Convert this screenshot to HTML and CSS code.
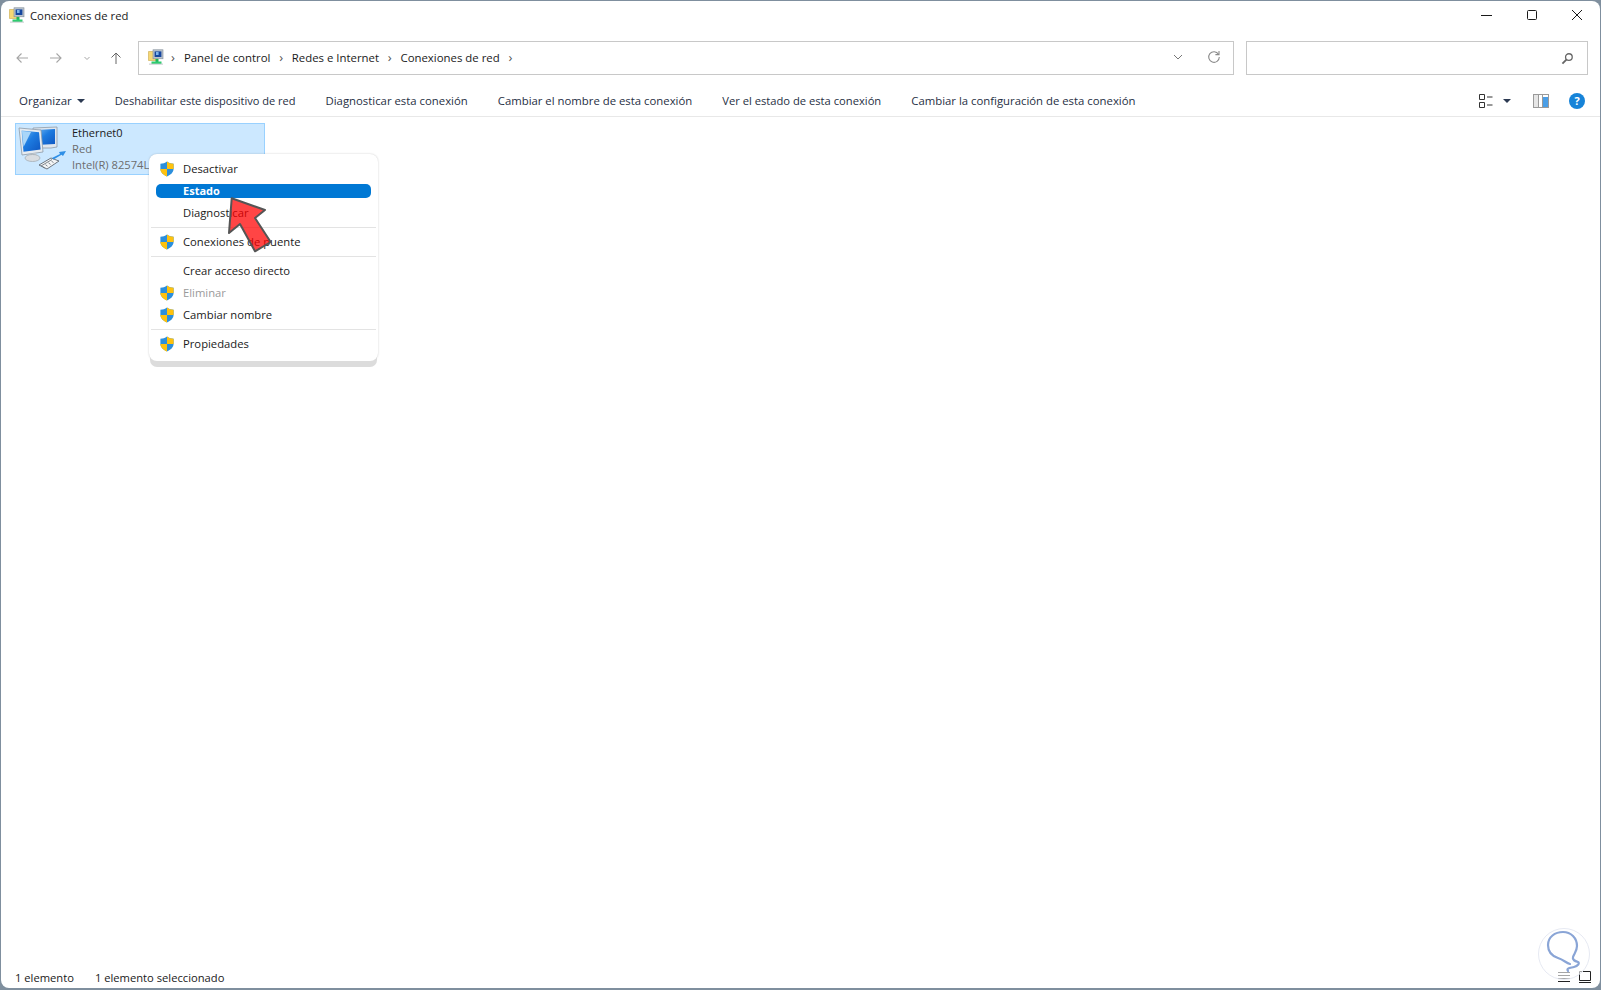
FILE: index.html
```html
<!DOCTYPE html>
<html lang="es">
<head>
<meta charset="utf-8">
<title>Conexiones de red</title>
<link rel="stylesheet" href="styles.css">
</head>
<body>
<svg class="defs" width="0" height="0">
  <defs>
    <symbol id="netfolder" viewBox="0 0 16 16">
      <path d="M0.500 2.500h4l1-1h4v10h-9z" fill="#f7d774" stroke="#c9a94a" stroke-width=".6"/>
      <rect x="5" y="0.800" width="10" height="9" fill="#b9c2cc" stroke="#7f8a96" stroke-width=".6"/>
      <rect x="6.600" y="2.400" width="6.800" height="5.600" fill="#16479f"/>
      <rect x="8" y="3" width="2.600" height="3" fill="#7fb4ea"/>
      <rect x="7.500" y="10" width="3" height="3" fill="#1fb45a"/>
      <rect x="3.500" y="12.500" width="10" height="2.500" fill="#2ecc6e"/>
      <rect x="1" y="14.600" width="14" height="1" fill="#c4c8cc"/>
    </symbol>
    <symbol id="shield" viewBox="0 0 16 16">
      <path d="M8 .5C6 2 4 2.600 1.400 2.800v5C1.400 11.400 4.400 14 8 15.500c3.600-1.500 6.600-4.100 6.600-7.700v-5C12 2.600 10 2 8 .5z" fill="#2c8fdc"/>
      <path d="M8 .5C10 2 12 2.600 14.600 2.800V8H8z" fill="#ffc20e"/>
      <path d="M8 8H1.400C1.400 11.400 4.400 14 8 15.500z" fill="#ffc20e"/>
    </symbol>
    <linearGradient id="screen" x1="0" y1="0" x2="1" y2="1">
      <stop offset="0" stop-color="#6fb6f2"/>
      <stop offset=".45" stop-color="#1d7be0"/>
      <stop offset="1" stop-color="#0f57c2"/>
    </linearGradient>
  </defs>
</svg>
<div class="window">
  <header class="titlebar">
    <svg class="title-icon"><use href="#netfolder"/></svg>
    <span class="title-text">Conexiones de red</span>
    <div class="winbtns">
      <svg class="winbtn" viewBox="0 0 12 12"><path d="M0 6.500h11" stroke="#1a1a1a" fill="none"/></svg>
      <svg class="winbtn" viewBox="0 0 12 12"><rect x="1.500" y="1.500" width="9" height="9" rx="1" stroke="#1a1a1a" fill="none"/></svg>
      <svg class="winbtn" viewBox="0 0 12 12"><path d="M1 1l10 10M11 1L1 11" stroke="#1a1a1a" fill="none"/></svg>
    </div>
  </header>

  <nav class="navbar">
    <div class="navbtns">
      <svg class="navico" viewBox="0 0 14 14"><path d="M13 7H2M6.500 2.500L2 7l4.500 4.500" stroke="#a6a6a6" fill="none" stroke-width="1.100"/></svg>
      <svg class="navico" viewBox="0 0 14 14"><path d="M1 7h11M7.500 2.500L12 7l-4.500 4.500" stroke="#a6a6a6" fill="none" stroke-width="1.100"/></svg>
      <svg class="navico small" viewBox="0 0 8 8"><path d="M1.500 3L4 5.500 6.500 3" stroke="#a6a6a6" fill="none"/></svg>
      <svg class="navico" viewBox="0 0 14 14"><path d="M7 13V2M2.500 6.500L7 2l4.500 4.500" stroke="#666" fill="none" stroke-width="1"/></svg>
    </div>
    <div class="address">
      <svg class="addr-icon"><use href="#netfolder"/></svg>
      <span class="crumb-sep first">›</span>
      <span class="crumb">Panel de control</span>
      <span class="crumb-sep">›</span>
      <span class="crumb">Redes e Internet</span>
      <span class="crumb-sep">›</span>
      <span class="crumb">Conexiones de red</span>
      <span class="crumb-sep">›</span>
      <span class="spacer"></span>
      <svg class="addr-chev" viewBox="0 0 10 10"><path d="M1 3l4 4 4-4" stroke="#777" fill="none"/></svg>
      <svg class="addr-refresh" viewBox="0 0 14 14"><path d="M11.500 4.200A5.300 5.300 0 1 0 12.300 7" stroke="#8a8a8a" fill="none" stroke-width="1.100"/><path d="M12 1v3.600H8.400" stroke="#8a8a8a" fill="none" stroke-width="1.100"/></svg>
    </div>
    <div class="search">
      <svg class="search-ico" viewBox="0 0 14 14"><circle cx="8.500" cy="5.500" r="3.600" stroke="#666" fill="none" stroke-width="1.400"/><path d="M5.800 8.200L1.500 12.500" stroke="#666" stroke-width="2"/></svg>
    </div>
  </nav>

  <div class="toolbar">
    <span class="tool organize">Organizar<i class="caret"></i></span>
    <span class="tool tool-narrow">Deshabilitar este dispositivo de red</span>
    <span class="tool tool-wide">Diagnosticar esta conexión</span>
    <span class="tool tool-wide">Cambiar el nombre de esta conexión</span>
    <span class="tool">Ver el estado de esta conexión</span>
    <span class="tool tool-wide">Cambiar la configuración de esta conexión</span>
    <span class="spacer"></span>
    <svg class="view-ico" viewBox="0 0 14 14"><path d="M.500.500h5v5h-5zM.500 8.500h5v5h-5zM8 3h5.500M8 11h5.500" stroke="#333" fill="none"/></svg>
    <i class="caret view-caret"></i>
    <svg class="pane-ico" viewBox="0 0 16 14"><rect x=".500" y=".500" width="15" height="13" fill="#fff" stroke="#9a9a9a"/><rect x="1" y="1" width="4" height="12" fill="#e6e6e6"/><rect x="10" y="3" width="5" height="10" fill="#4a9ee6"/><path d="M5.500 1v12M9.500 1v12" stroke="#9a9a9a"/></svg>
    <span class="help">?</span>
  </div>

  <main class="content">
    <div class="item">
      <svg class="item-icon" viewBox="0 0 48 48">
        <path d="M15 3l24-1v20l-6 1H15z" fill="#dfe6ee" stroke="#8d9aa8" stroke-width=".8"/>
        <path d="M18 5l19-1v15l-19 1z" fill="url(#screen)"/>
        <path d="M1 3l22 2 2 22-21 3z" fill="#e6ebf0" stroke="#8d9aa8" stroke-width=".8"/>
        <path d="M3.500 5.500l17.500 1.700 1.600 17.300-17.100 2.200z" fill="url(#screen)"/>
        <path d="M4 6l9 1-7.500 15z" fill="#a9d6f9"/>
        <path d="M11 29l7-1 1 4-7 1z" fill="#c5ccd3"/>
        <ellipse cx="14.500" cy="33" rx="7.500" ry="3.500" fill="#d9dde1" stroke="#a5adb5" stroke-width=".8"/>
        <path d="M21 40l12-7 8 3-12 8z" fill="#f3f5f6" stroke="#5f6870" stroke-width=".9"/>
        <path d="M24.500 41.500l2 1.500M27.500 39.700l2 1.500M30.500 37.900l2 1.500M33.500 36.100l2 1.500M23 41l11-6.500" stroke="#5f6870" stroke-width=".8" fill="none"/>
        <path d="M34 33l8-4-1-2 7-1-3 5-1.500-1.200-8 4.600z" fill="#2f8fe6"/>
      </svg>
      <div class="item-text">
        <span class="item-name">Ethernet0</span>
        <span class="item-sub">Red</span>
        <span class="item-sub">Intel(R) 82574L</span>
      </div>
    </div>
  </main>

  <footer class="statusbar">
    <span>1 elemento</span>
    <span>1 elemento seleccionado</span>
    <span class="spacer"></span>
    <svg class="status-ico" viewBox="0 0 12 12"><path d="M0 1.500h12M0 4.500h12M0 7.500h12M0 10.500h12" stroke="#222" fill="none"/></svg>
    <svg class="status-ico" viewBox="0 0 12 12"><path d="M.500 .500h11v9h-11zM0 11.500h12" stroke="#222" fill="none"/></svg>
  </footer>

  <div class="menu">
    <div class="mi"><svg class="shield"><use href="#shield"/></svg><span>Desactivar</span></div>
    <div class="mi active"><span>Estado</span></div>
    <div class="mi"><span>Diagnosticar</span></div>
    <hr class="msep">
    <div class="mi"><svg class="shield"><use href="#shield"/></svg><span>Conexiones de puente</span></div>
    <hr class="msep">
    <div class="mi"><span>Crear acceso directo</span></div>
    <div class="mi disabled"><svg class="shield"><use href="#shield"/></svg><span>Eliminar</span></div>
    <div class="mi"><svg class="shield"><use href="#shield"/></svg><span>Cambiar nombre</span></div>
    <hr class="msep">
    <div class="mi"><svg class="shield"><use href="#shield"/></svg><span>Propiedades</span></div>
  </div>

  <svg class="pointer" viewBox="0 0 60 70">
    <path d="M11.700 9.300L45 21l-10 8 15.700 24L35 62.300 20 35 9 44z" fill="#ff0000" fill-opacity=".73" stroke="#555" stroke-width="2" stroke-linejoin="round"/>
  </svg>

  <svg class="watermark" viewBox="0 0 54 54">
    <circle cx="27" cy="27" r="25.500" fill="#fff" fill-opacity=".6" stroke="#e6e9f2"/>
    <path d="M33 37c-4-1-6-4-12-6-6-2-10-6-10-13C11 10 18 5 26 5s14 6 14 14c0 5-3 8-4 11-1 3 2 4 5 5 2 1 0 4-4 5s-8 1-6 4" fill="none" stroke="#8aa5d6" stroke-width="2.200" stroke-linecap="round"/>
  </svg>
</div>
</body>
</html>
```

FILE: styles.css
```css
* { box-sizing: border-box; }
html, body { margin: 0; height: 100%; overflow: hidden; }
body { background: #7f8f9e; font-family: "Open Sans", "Noto Sans", "Liberation Sans", sans-serif; font-size: 11.5px; color: #1a1a1a; }
.defs { position: absolute; }
.window {
  position: relative; width: 1599px; height: 987px; margin: 1px 1px 2px 1px;
  background: #fff; border-radius: 8px; display: flex; flex-direction: column; overflow: hidden;
}
.spacer { flex: 1; }

.titlebar { height: 30px; display: flex; align-items: center; padding: 0 0 2px 8px; flex: none; }
.title-icon { width: 16px; height: 16px; margin-right: 5px; }
.title-text { font-size: 11.3px; }
.winbtns { margin-left: auto; display: flex; gap: 33px; padding-right: 17px; }
.winbtn { width: 12px; height: 12px; display: block; }

.navbar { height: 34px; display: flex; align-items: stretch; margin-top: 10px; padding-right: 12px; flex: none; }
.navbtns { width: 137px; display: flex; align-items: center; padding-left: 14px; flex: none; }
.navico { width: 14px; height: 14px; margin-right: 20px; flex: none; }
.navico.small { width: 8px; height: 8px; margin-right: 18px; }
.navico:last-child { margin-right: 0; }
.address { flex: 1; border: 1px solid #c8c8c8; display: flex; align-items: center; padding: 0 12px 2px 9px; }
.addr-icon { width: 16px; height: 16px; margin-right: 7px; }
.crumb { font-size: 11.4px; }
.crumb-sep { color: #555; font-size: 13px; margin: 0 8.750px; line-height: 1; }
.crumb-sep.first { margin-left: 0; margin-right: 9px; }
.addr-chev { width: 10px; height: 10px; margin-right: 24px; }
.addr-refresh { width: 14px; height: 14px; }
.search { width: 342px; margin-left: 12px; border: 1px solid #c8c8c8; display: flex; align-items: center; justify-content: flex-end; padding-right: 13px; }
.search-ico { width: 13px; height: 13px; }

.toolbar { height: 42px; border-bottom: 1px solid #e8e8e8; display: flex; align-items: center; padding: 10px 15px 0 18px; gap: 30px; flex: none; color: #1f2f44; }
.tool { font-size: 11.2px; white-space: nowrap; }
.tool-narrow { font-size: 11.05px; }
.tool-wide { font-size: 11.35px; }
.organize { display: flex; align-items: center; font-size: 11.5px; }
.caret { display: block; width: 0; height: 0; border-left: 4px solid transparent; border-right: 4px solid transparent; border-top: 4px solid #2c3a52; margin-left: 5px; }
.view-ico { width: 14px; height: 14px; margin-right: -20px; }
.view-caret { margin-left: 0; margin-right: -8px; }
.pane-ico { width: 16px; height: 14px; margin-right: -10px; }
.help { width: 16px; height: 16px; border-radius: 50%; background: #1683d8; color: #fff; font-weight: 700; font-size: 11px; display: flex; align-items: center; justify-content: center; }

.content { flex: 1; padding: 6px 0 0 14px; }
.item { width: 250px; height: 52px; background: #cce8ff; border: 1px solid #99d1ff; display: flex; overflow: hidden; }
.item-icon { width: 48px; height: 48px; margin: 1px 0 0 2px; flex: none; }
.item-text { display: flex; flex-direction: column; margin-left: 6px; padding-top: 1px; white-space: nowrap; }
.item-name, .item-sub { font-size: 11.2px; line-height: 16px; }
.item-name { font-size: 11px; }
.item-sub { color: #6d6d6d; }

.statusbar { height: 24px; display: flex; align-items: center; padding: 2px 9px 0 14px; gap: 21px; flex: none; font-size: 11.2px; }
.status-ico { width: 12px; height: 12px; margin-left: -12px; }

.menu {
  position: absolute; left: 148px; top: 153px; width: 229px; height: 207px;
  background: #fff; border-radius: 8px; padding: 4px 2px 0;
  box-shadow: 0 7px 0 -1px #dcdcdc, 0 0 2px rgba(0,0,0,.22);
}
.mi { height: 22px; display: flex; align-items: center; padding: 0 0 2px 32px; position: relative; font-size: 11.25px; }
.mi.active { color: #fff; font-weight: 700; font-size: 11px; }
.mi.active::before { content: ""; position: absolute; left: 5px; right: 5px; top: 4px; height: 14px; background: #0078d4; border-radius: 5px; }
.mi.active span { position: relative; }
.mi.disabled { color: #9a9a9a; }
.shield { position: absolute; left: 8px; top: 3px; width: 16px; height: 16px; }
.msep { height: 1px; margin: 3px 0 3px; border: 0; background: #e3e3e3; }

.pointer { position: absolute; left: 219px; top: 188px; width: 60px; height: 70px; }
.watermark { position: absolute; left: 1536px; top: 926px; width: 54px; height: 54px; pointer-events: none; }
```
